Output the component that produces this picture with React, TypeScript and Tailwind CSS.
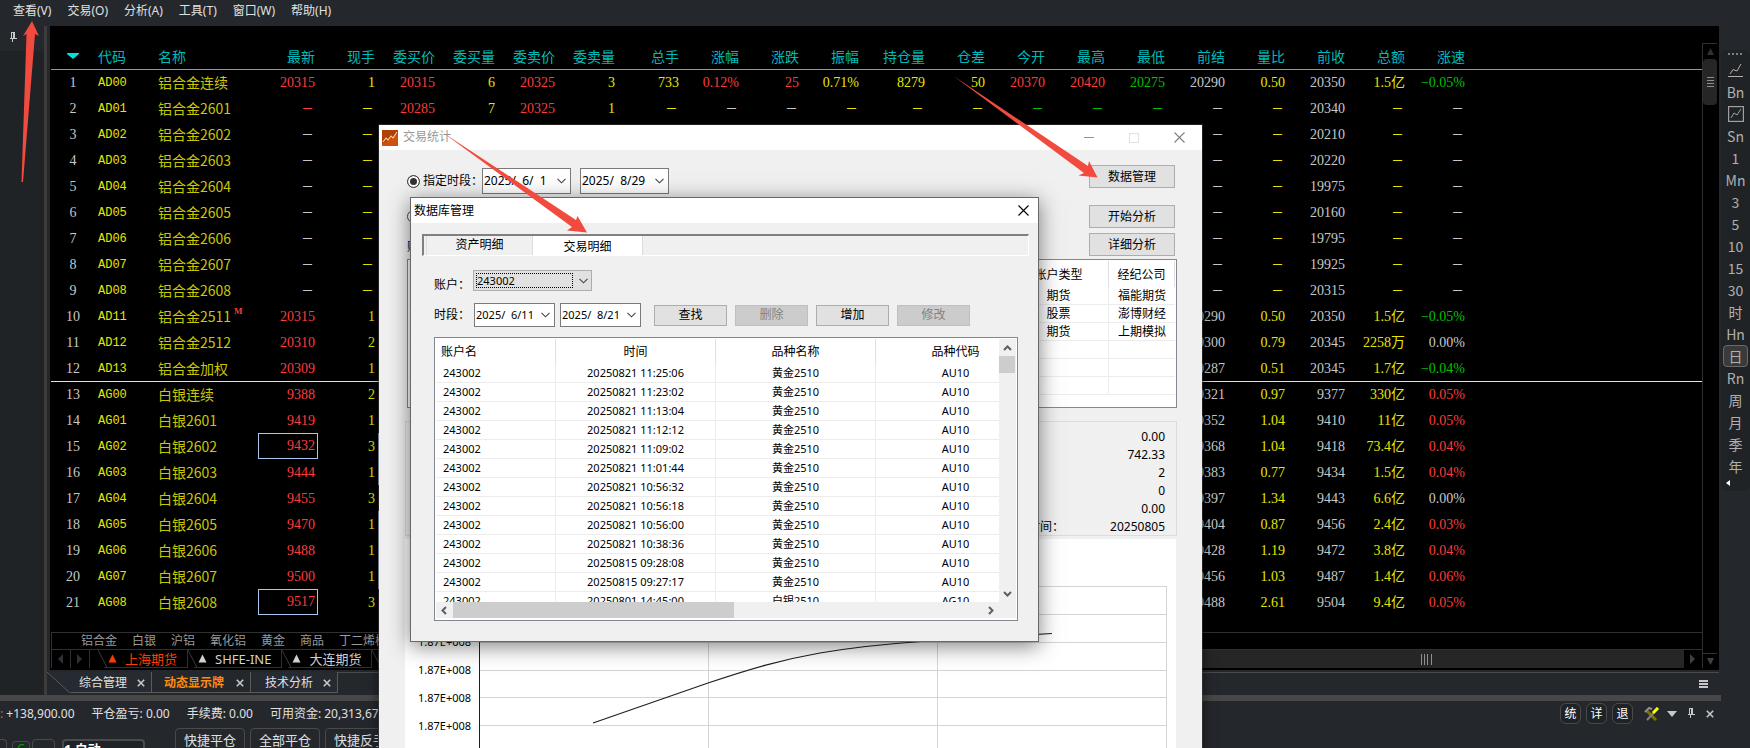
import type { ReactNode } from 'react';

interface Quote {
  code: string;
  name: string;
  main?: boolean;
  // latest, volume, bid, bid size, ask, ask size, total, change %, change, amplitude,
  // open interest, oi change, open, high, low, prev settle, ratio, prev close, amount, speed
  cells: string[];
}

// A leading letter gives the cell's colour: r red, y yellow, g green, w white
const COLORS: Record<string, string> = {
  r: 'text-[#ff3b3b]',
  y: 'text-[#e6e600]',
  g: 'text-[#00c000]',
  w: 'text-[#c8c8c8]',
};

const COLUMNS = [
  '最新', '现手', '委买价', '委买量', '委卖价', '委卖量', '总手', '涨幅', '涨跌', '振幅',
  '持仓量', '仓差', '今开', '最高', '最低', '前结', '量比', '前收', '总额', '涨速',
];

const COL_WIDTHS = [
  'w-[60px]', 'w-[60px]', 'w-[60px]', 'w-[60px]', 'w-[60px]', 'w-[60px]', 'w-[64px]', 'w-[60px]', 'w-[60px]', 'w-[60px]',
  'w-[66px]', 'w-[60px]', 'w-[60px]', 'w-[60px]', 'w-[60px]', 'w-[60px]', 'w-[60px]', 'w-[60px]', 'w-[60px]', 'w-[60px]',
];

function idle(close: string): string[] {
  return [
    'w-', 'y-', '', '', '', '', '', '', '', '',
    '', '', '', '', '', 'w-', 'y-', `w${close}`, 'y-', 'w-',
  ];
}

function live(last: string, vol: string, settle: string, ratio: string, close: string, amount: string, speed: string): string[] {
  return [
    `r${last}`, `y${vol}`, '', '', '', '', '', '', '', '',
    '', '', '', '', '', `w${settle}`, `y${ratio}`, `w${close}`, `y${amount}`, speed,
  ];
}

const QUOTES: Quote[] = [
  {
    code: 'AD00', name: '铝合金连续',
    cells: [
      'r20315', 'y1', 'r20315', 'y6', 'r20325', 'y3', 'y733', 'r0.12%', 'r25', 'y0.71%',
      'y8279', 'y50', 'r20370', 'r20420', 'g20275', 'w20290', 'y0.50', 'w20350', 'y1.5亿', 'g−0.05%',
    ],
  },
  {
    code: 'AD01', name: '铝合金2601',
    cells: [
      'r-', 'y-', 'r20285', 'y7', 'r20325', 'y1', 'y-', 'w-', 'w-', 'y-',
      'y-', 'y-', 'g-', 'g-', 'g-', 'w-', 'y-', 'w20340', 'y-', 'w-',
    ],
  },
  { code: 'AD02', name: '铝合金2602', cells: idle('20210') },
  { code: 'AD03', name: '铝合金2603', cells: idle('20220') },
  { code: 'AD04', name: '铝合金2604', cells: idle('19975') },
  { code: 'AD05', name: '铝合金2605', cells: idle('20160') },
  { code: 'AD06', name: '铝合金2606', cells: idle('19795') },
  { code: 'AD07', name: '铝合金2607', cells: idle('19925') },
  { code: 'AD08', name: '铝合金2608', cells: idle('20315') },
  { code: 'AD11', name: '铝合金2511', main: true, cells: live('20315', '1', '20290', '0.50', '20350', '1.5亿', 'g−0.05%') },
  { code: 'AD12', name: '铝合金2512', cells: live('20310', '2', '20300', '0.79', '20345', '2258万', 'w0.00%') },
  { code: 'AD13', name: '铝合金加权', cells: live('20309', '1', '20287', '0.51', '20345', '1.7亿', 'g−0.04%') },
  { code: 'AG00', name: '白银连续', cells: live('9388', '2', '9321', '0.97', '9377', '330亿', 'r0.05%') },
  { code: 'AG01', name: '白银2601', cells: live('9419', '1', '9352', '1.04', '9410', '11亿', 'r0.05%') },
  { code: 'AG02', name: '白银2602', cells: live('9432', '3', '9368', '1.04', '9418', '73.4亿', 'r0.04%') },
  { code: 'AG03', name: '白银2603', cells: live('9444', '1', '9383', '0.77', '9434', '1.5亿', 'r0.04%') },
  { code: 'AG04', name: '白银2604', cells: live('9455', '3', '9397', '1.34', '9443', '6.6亿', 'w0.00%') },
  { code: 'AG05', name: '白银2605', cells: live('9470', '1', '9404', '0.87', '9456', '2.4亿', 'r0.03%') },
  { code: 'AG06', name: '白银2606', cells: live('9488', '1', '9428', '1.19', '9472', '3.8亿', 'r0.04%') },
  { code: 'AG07', name: '白银2607', cells: live('9500', '1', '9456', '1.03', '9487', '1.4亿', 'r0.06%') },
  { code: 'AG08', name: '白银2608', cells: live('9517', '3', '9488', '2.61', '9504', '9.4亿', 'r0.05%') },
];

// row:column of the cells that flash
const FLASHES = ['14:0', '20:0', '14:2', '15:2', '17:2', '18:2', '19:2'];

const TRADES = [
  ['20250821 11:25:06', '黄金2510', 'AU10'],
  ['20250821 11:23:02', '黄金2510', 'AU10'],
  ['20250821 11:13:04', '黄金2510', 'AU10'],
  ['20250821 11:12:12', '黄金2510', 'AU10'],
  ['20250821 11:09:02', '黄金2510', 'AU10'],
  ['20250821 11:01:44', '黄金2510', 'AU10'],
  ['20250821 10:56:32', '黄金2510', 'AU10'],
  ['20250821 10:56:18', '黄金2510', 'AU10'],
  ['20250821 10:56:00', '黄金2510', 'AU10'],
  ['20250821 10:38:36', '黄金2510', 'AU10'],
  ['20250815 09:28:08', '黄金2510', 'AU10'],
  ['20250815 09:27:17', '黄金2510', 'AU10'],
  ['20250801 14:45:00', '白银2510', 'AG10'],
];

const ACCOUNTS = [
  ['期货', '福能期货'],
  ['股票', '澎博财经'],
  ['期货', '上期模拟'],
  ['', ''],
  ['', ''],
  ['', ''],
];

const PERIODS = ['Sn', '1', 'Mn', '3', '5', '10', '15', '30', '时', 'Hn', '日', 'Rn', '周', '月', '季', '年'];

function PinIcon() {
  return (
    <svg width="8" height="11" viewBox="0 0 8 11" fill="none" stroke="#c8c8c8" shapeRendering="crispEdges">
      <path d="M2.5 0.5V6M2 0.5H6M5.5 0.5V6M4.5 1V6M0.5 6.5H7.5M3.5 7V10" />
    </svg>
  );
}

function CloseIcon({ size, color }: { size: number; color: string }) {
  return (
    <svg width={size} height={size} viewBox="0 0 11 11" stroke={color} strokeWidth="1.1">
      <path d="M0.5 0.5L10.5 10.5M10.5 0.5L0.5 10.5" />
    </svg>
  );
}

function TabClose() {
  return (
    <svg width="8" height="8" viewBox="0 0 8 8" stroke="#c8c8c8" strokeWidth="1.6">
      <path d="M0.8 0.8L7.2 7.2M7.2 0.8L0.8 7.2" />
    </svg>
  );
}

function Chevron() {
  return (
    <svg width="9" height="6" viewBox="0 0 9 6" fill="none" stroke="#444" strokeWidth="1.1">
      <path d="M0.5 0.8L4.5 4.8L8.5 0.8" />
    </svg>
  );
}

function Quotes() {
  return (
    <table className="w-full table-fixed border-separate border-spacing-0 whitespace-nowrap">
      <colgroup>
        <col className="w-[47px]" />
        <col className="w-[60px]" />
        <col className="w-[100px]" />
        {COL_WIDTHS.map((w, i) => (
          <col key={i} className={w} />
        ))}
        <col />
      </colgroup>
      <thead>
        <tr className="h-[43px] align-bottom text-[14px] leading-5 text-[#00baba] font-['Noto_Sans_CJK_SC',sans-serif]">
          <th className="pb-[10px] pr-[3px]">
            <svg className="mx-auto" width="12" height="6" viewBox="0 0 12 6">
              <path d="M0 0H12V1L6 6L0 1Z" fill="#00e0e0" />
            </svg>
          </th>
          <th className="pb-[3px] text-left font-normal">代码</th>
          <th className="pb-[3px] text-left font-normal">名称</th>
          {COLUMNS.map((c) => (
            <th key={c} className="pb-[3px] pr-[3px] text-right font-normal">{c}</th>
          ))}
          <th />
        </tr>
      </thead>
      <tbody>
        {QUOTES.map((q, row) => {
          const line = row === 0 ? 'border-t border-[#00d4d4]' : row === 12 ? 'border-t border-[#ffff00]' : 'border-t border-transparent';
          return (
            <tr key={q.code} className="h-[26px] leading-[18px]">
              <td className={`p-0 pr-[3px] text-center text-[14px] text-[#c8c8c8] font-['Liberation_Serif',serif] ${line}`}>{row + 1}</td>
              <td className={`p-0 text-[12px] text-[#e6e600] font-['Liberation_Mono',monospace] ${line}`}>{q.code}</td>
              <td className={`p-0 pb-px text-[14px] text-[#c8c800] font-['Noto_Sans_CJK_SC',sans-serif] ${line}`}>
                <div className="flex items-start gap-[3px]">
                  {q.name}
                  {q.main && <span className="text-[9px] font-bold leading-[9px] text-[#ff3b3b] font-['Liberation_Serif',serif]">M</span>}
                </div>
              </td>
              {q.cells.map((cell, col) => {
                const value = cell.slice(1);
                const flash = FLASHES.includes(`${row}:${col}`)
                  ? 'shadow-[inset_0_0_0_1px_#a8c8f0,0_-1px_0_0_#a8c8f0]'
                  : '';
                if (value === '-') {
                  return (
                    <td key={col} className={`p-0 pb-px pr-[6px] text-right text-[9px] font-bold font-['Liberation_Sans',sans-serif] ${COLORS[cell[0]]} ${line}`}>
                      —
                    </td>
                  );
                }
                return (
                  <td
                    key={col}
                    className={`p-0 pr-[3px] text-right text-[14px] font-['Liberation_Serif','Noto_Sans_CJK_SC',serif] ${COLORS[cell[0]] ?? ''} ${line}`}
                  >
                    {flash ? (
                      <div className="-mr-[3px] -mt-px flex h-[26px] items-center justify-end border border-[#a8c8f0] pr-[2px]">{value}</div>
                    ) : (
                      value
                    )}
                  </td>
                );
              })}
              <td className={`p-0 ${line}`} />
            </tr>
          );
        })}
      </tbody>
    </table>
  );
}

function MarketTab({ label, color }: { label: string; color: string }) {
  return (
    <button className={`flex h-[18px] items-center gap-2 border-b border-r border-[#303030] pl-1 pr-[10px] text-[13px] leading-4 ${color}`}>
      <svg width="9" height="9" viewBox="0 0 9 9">
        <path d="M4.5 0.5L8.5 8.5H0.5Z" fill="currentColor" />
      </svg>
      <span>{label}</span>
    </button>
  );
}

function Slant() {
  return (
    <svg className="-mr-3 shrink-0" width="18" height="18" viewBox="0 0 18 18" fill="none" stroke="#383838">
      <path d="M0 0L9 17.5" />
    </svg>
  );
}

function PageTab({ label, active, first }: { label: string; active?: boolean; first?: boolean }) {
  return (
    <div className={`relative flex h-[21px] items-center border-b border-r border-[#5a5a5a] pr-[6px] pt-px text-[12px] leading-4 ${first ? 'gap-[10px] bg-[#262a31] pl-8' : active ? 'gap-3 pl-3' : 'gap-[10px] bg-[#262a31] pl-[14px]'}`}>
      <button className={active ? 'font-bold text-[#ff8c10]' : 'text-[#e0e0e0]'}>{label}</button>
      <button aria-label="关闭"><TabClose /></button>
      {first && (
        <svg className="absolute left-0 top-0" width="24" height="21" viewBox="0 0 24 21">
          <path d="M0 0V21H24Z" fill="#24272c" />
          <path d="M0 0L23 21" stroke="#5a5a5a" />
        </svg>
      )}
    </div>
  );
}

function MarketFooter() {
  return (
    <div className="ml-px">
      <div className="flex h-[17px] items-center gap-[15px] border-l border-t border-[#303030] pl-[29px] text-[12px] leading-4 text-[#9a9a9a]">
        {['铝合金', '白银', '沪铝', '氧化铝', '黄金', '商品', '丁二烯橡胶'].map((s) => (
          <button key={s}>{s}</button>
        ))}
      </div>
      <div className="flex h-[19px] border-l border-t border-[#303030]">
        <button aria-label="向左" className="flex w-[19px] items-center justify-center border-r border-[#303030]">
          <svg width="6" height="10" viewBox="0 0 6 10"><path d="M5 0V10L0 5Z" fill="#303030" /></svg>
        </button>
        <button aria-label="向右" className="mr-2 flex w-[19px] items-center justify-center border-r border-[#303030]">
          <svg width="6" height="10" viewBox="0 0 6 10"><path d="M0 0V10L5 5Z" fill="#303030" /></svg>
        </button>
        <Slant />
        <MarketTab label="上海期货" color="text-[#ff3c00]" />
        <Slant />
        <MarketTab label="SHFE-INE" color="text-[#d0d0d0]" />
        <Slant />
        <MarketTab label="大连期货" color="text-[#d0d0d0]" />
        <Slant />
        <div className="flex flex-1 items-center justify-end bg-[#262626]">
          <svg className="mr-[252px]" width="11" height="11" viewBox="0 0 11 11" stroke="#909090" shapeRendering="crispEdges">
            <path d="M0.5 0V11M3.5 0V11M6.5 0V11M10.5 0V11" />
          </svg>
        </div>
        <button aria-label="向右滚动" className="flex w-[18px] items-center justify-center bg-black">
          <svg width="6" height="10" viewBox="0 0 6 10"><path d="M0 0V10L5 5Z" fill="#404040" /></svg>
        </button>
      </div>
    </div>
  );
}

function QuoteScrollbar() {
  return (
    <div className="flex w-[17px] shrink-0 flex-col pb-[2px] pr-[2px] pt-[17px]">
      <div className="flex flex-1 flex-col border-l border-t border-[#303030]">
        <button aria-label="向上" className="flex h-[15px] items-center justify-center">
          <svg width="7" height="7" viewBox="0 0 7 7"><path d="M3.5 0L7 7H0Z" fill="#303030" /></svg>
        </button>
        <div className="flex h-[46px] flex-col items-center justify-center gap-[2px] rounded bg-[#262626]">
          <div className="h-px w-[7px] bg-[#909090]" />
          <div className="h-px w-[7px] bg-[#909090]" />
          <div className="h-px w-[7px] bg-[#909090]" />
          <div className="h-px w-[7px] bg-[#909090]" />
        </div>
        <div className="flex-1" />
        <button aria-label="向下" className="flex h-[15px] items-center justify-center border-t border-[#303030]">
          <svg width="7" height="7" viewBox="0 0 7 7"><path d="M3.5 7L7 0H0Z" fill="#404040" /></svg>
        </button>
      </div>
    </div>
  );
}

function PeriodBar() {
  return (
    <div className="mt-6 flex h-[441px] flex-col items-center rounded-md bg-[#1f2326] text-[14px] text-[#b0b0b0] font-['Noto_Sans_CJK_SC',sans-serif]">
      <svg className="mt-[3px]" width="15" height="2" viewBox="0 0 15 2" stroke="#808080" strokeWidth="2" strokeDasharray="2 2">
        <path d="M0 1H15" />
      </svg>
      <button aria-label="分时" className="flex h-[26px] items-end pb-[3px]">
        <svg width="15" height="15" viewBox="0 0 15 15" fill="none" stroke="#b0b0b0">
          <path d="M2 11L5 6.5L9 8L13 1M0 13.5H15" />
        </svg>
      </button>
      <button className="flex h-[22px] items-center">Bn</button>
      <button aria-label="走势" className="flex h-[22px] items-center">
        <svg width="16" height="16" viewBox="0 0 16 16" fill="none" stroke="#a0a0a0">
          <rect x="0.5" y="0.5" width="15" height="15" strokeWidth="1.4" />
          <path d="M3 12L6 7L9 9L13 3" />
        </svg>
      </button>
      {PERIODS.map((p) => (
        <button
          key={p}
          className={`flex h-[22px] w-[25px] shrink-0 items-center justify-center ${p === '日' ? 'rounded border border-[#6a6a6a] bg-[#3a3a3a]' : ''}`}
        >
          {p}
        </button>
      ))}
      <svg className="mr-4 mt-[3px]" width="4" height="6" viewBox="0 0 4 6"><path d="M4 0V6L0 3Z" fill="#fff" /></svg>
    </div>
  );
}

function StatusPanel() {
  return (
    <div className="flex flex-1 justify-between bg-[#24272c] text-[12px] text-[#e0e0e0]">
      <div className="w-[378px] whitespace-nowrap">
        <div className="flex h-[26px] items-center gap-[17px] overflow-hidden leading-4">
          <span><span className="text-[#c86432]">:</span> +138,900.00</span>
          <span>平仓盈亏: 0.00</span>
          <span>手续费: 0.00</span>
          <span>可用资金: 20,313,67</span>
        </div>
        <div className="flex items-start overflow-hidden text-[13px]">
          <div className="mt-3 h-6 w-[7px] shrink-0 rounded-tr border-r border-t border-[#4a4a4a]" />
          <button className="ml-[5px] mt-[14px] h-[14px] w-[18px] shrink-0 rounded-t border-x border-t border-[#4a4a4a] text-[12px] leading-3 text-[#00a000]">C</button>
          <div className="ml-[2px] mt-3 h-6 w-[23px] shrink-0 rounded border border-[#4a4a4a]" />
          <select aria-label="手数" className="ml-[7px] mt-3 h-[18px] w-[83px] shrink-0 appearance-none rounded-t border-x-2 border-t-2 border-[#4a4a4a] bg-[#1f2326] font-bold leading-4 text-white">
            <option>1 自动</option>
          </select>
          <div className="ml-[30px] flex gap-[5px]">
            {['快捷平仓', '全部平仓', '快捷反手'].map((b) => (
              <button key={b} className="mt-px h-[26px] w-[70px] shrink-0 rounded border border-[#4a4a4a]">{b}</button>
            ))}
          </div>
        </div>
      </div>
      <div className="mt-[2px] flex h-[21px] items-center pr-9">
        <div className="flex gap-[5px]">
          {['统', '详', '退'].map((b) => (
            <button key={b} className="size-[21px] rounded-md border border-[#4a4a4a] bg-[#1f2326] text-[12px] leading-4 text-white">{b}</button>
          ))}
        </div>
        <button aria-label="设置" className="ml-[11px]">
          <svg width="15" height="14" viewBox="0 0 15 14" fill="none">
            <path d="M3 4L12 13" stroke="#807000" strokeWidth="3" />
            <path d="M3 13L14 1" stroke="#808080" strokeWidth="2" />
            <path d="M9 6L14 1" stroke="#ffff00" strokeWidth="3" />
            <path d="M1 5L5 1L8 2" stroke="#909090" strokeWidth="2" />
          </svg>
        </button>
        <svg className="ml-2" width="10" height="6" viewBox="0 0 10 6"><path d="M0 0H10L5 6Z" fill="#c8c8c8" /></svg>
        <button aria-label="固定" className="ml-[10px]"><PinIcon /></button>
        <button aria-label="关闭" className="ml-[11px]"><TabClose /></button>
      </div>
    </div>
  );
}

function DateBox({ label, value, className }: { label: string; value: string; className: string }) {
  return (
    <div className={`flex items-center border border-[#7a7a7a] bg-white pr-1 ${className}`}>
      <input aria-label={label} defaultValue={value} className="w-0 min-w-0 flex-1 bg-transparent pl-px text-black outline-none" />
      <button aria-label="选择日期"><Chevron /></button>
    </div>
  );
}

function WinButton({ children, className = '', disabled }: { children: ReactNode; className?: string; disabled?: boolean }) {
  return (
    <button
      disabled={disabled}
      className={`border text-[12px] leading-4 ${disabled ? 'border-[#bfbfbf] bg-[#cccccc] text-[#838383]' : 'border-[#adadad] bg-[#e1e1e1] text-black'} ${className}`}
    >
      {children}
    </button>
  );
}

function EquityChart() {
  return (
    <svg className="block bg-white" width="771" height="230" viewBox="0 0 771 230">
      <g stroke="#d4d4d4" shapeRendering="crispEdges">
        <path d="M74 47.5H762M74 75.5H762M74 103.5H762M74 131.5H762M74 158.5H762M74 186.5H762M74 214.5H762" />
        <path d="M303.5 47V230M532.5 47V230M761.5 47V230" />
      </g>
      <path d="M74.5 47V230" stroke="#202020" shapeRendering="crispEdges" />
      <path d="M188 184L303 144C345 130 375 121 415 114C450 108 480 105 516 102.5C560 100 600 97 647 94.5" fill="none" stroke="#202020" strokeWidth="1.2" />
      <g className="text-[11px]" fill="#000">
        <text x="13" y="107">1.87E+008</text>
        <text x="13" y="135">1.87E+008</text>
        <text x="13" y="163">1.87E+008</text>
        <text x="13" y="191">1.87E+008</text>
      </g>
    </svg>
  );
}

function StatsWindow() {
  return (
    <section className="absolute left-[378px] top-[124px] w-[825px] border border-[#505050]/40 bg-[#f0f0f0] bg-clip-padding text-[12px] text-black shadow-[0_0_12px_rgba(0,0,0,0.5)]">
      <header className="flex h-[25px] items-center bg-white pl-[3px] pr-[17px]">
        <svg width="16" height="16" viewBox="0 0 16 16">
          <rect width="16" height="16" fill="#d05010" />
          <path d="M0 0H16V4L0 14Z" fill="#b04008" />
          <path d="M1 12L4 8L6 10L9 6L11 8L15 2" fill="none" stroke="#ffd8a0" strokeWidth="1.1" />
        </svg>
        <h2 className="ml-[5px] flex-1 pb-px leading-4 text-[#999]">交易统计</h2>
        <div className="flex items-center gap-[35px]">
          <button aria-label="最小化" className="h-px w-[10px] bg-[#909090]" />
          <button aria-label="最大化" className="size-[10px] border border-[#e0e0e0]" />
          <button aria-label="关闭"><CloseIcon size={11} color="#808080" /></button>
        </div>
      </header>
      <div className="px-[26px]">
        <div className="flex h-[109px] justify-between">
          <div className="pl-[2px] pt-[18px]">
            <div className="flex h-[26px] items-center">
              <input id="range" type="radio" name="mode" defaultChecked className="m-0 size-[13px] shrink-0 appearance-none rounded-full border border-[#444] bg-[#333] shadow-[inset_0_0_0_2px_#fff]" />
              <label htmlFor="range" className="ml-[3px] w-[59px] whitespace-nowrap">指定时段：</label>
              <DateBox label="开始日期" value={'2025/\u00a0 6/\u00a0 1'} className="relative h-[26px] w-[89px]" />
              <DateBox label="结束日期" value={'2025/\u00a0 8/29'} className="ml-[9px] h-[26px] w-[89px]" />
            </div>
            <div className="mt-[13px] flex items-center">
              <input id="all" type="radio" name="mode" className="m-0 size-[13px] appearance-none rounded-full border border-[#444] bg-white" />
              <label htmlFor="all" className="ml-[3px]">全部时段</label>
            </div>
            <div className="mt-[14px] leading-4">账户：</div>
          </div>
          <div className="flex flex-col pr-px pt-[15px]">
            <WinButton className="h-[23px] w-[86px] pt-px">数据管理</WinButton>
            <WinButton className="mt-[17px] h-[23px] w-[86px] pt-px">开始分析</WinButton>
            <WinButton className="mt-[5px] h-[23px] w-[86px] pt-px">详细分析</WinButton>
          </div>
        </div>
        <div className="ml-[2px] mr-[-1px] h-[149px] border border-[#828790] bg-white p-px">
          <table className="w-full table-fixed border-separate border-spacing-0 leading-4">
            <colgroup>
              <col />
              <col className="w-[100px]" />
              <col className="w-[66px]" />
            </colgroup>
            <thead>
              <tr className="h-[26px]">
                <th />
                <th className="border-r border-[#e0e0e0] p-0 pt-[2px] font-normal">账户类型</th>
                <th className="border-r border-[#e0e0e0] p-0 pt-[2px] font-normal">经纪公司</th>
              </tr>
            </thead>
            <tbody>
              {ACCOUNTS.map((a, i) => (
                <tr key={i} className="h-[18px] text-center">
                  <td className="border-b border-[#ececec] p-0" />
                  <td className="border-b border-r border-[#ececec] p-0">{a[0]}</td>
                  <td className="border-b border-[#ececec] p-0">{a[1]}</td>
                </tr>
              ))}
            </tbody>
          </table>
        </div>
        <div className="mr-[-1px] mt-[13px] flex h-[115px] justify-end border border-[#dcdcdc] pr-[11px] pt-[6px]">
          <dl className="grid w-[185px] auto-rows-[18px] grid-cols-[1fr_auto] content-start text-right leading-[18px]">
            <dt /><dd>0.00</dd>
            <dt /><dd>742.33</dd>
            <dt /><dd>2</dd>
            <dt /><dd>0</dd>
            <dt /><dd>0.00</dd>
            <dt className="text-left">最后交易时间：</dt><dd>20250805</dd>
          </dl>
        </div>
        <div className="mt-[3px]">
          <EquityChart />
        </div>
      </div>
    </section>
  );
}

function TradeList() {
  return (
    <div className="ml-[23px] mr-[20px] mt-[10px] border border-[#828790] bg-white p-px">
      <div className="flex h-[263px]">
        <div className="min-w-0 flex-1 overflow-hidden">
          <table className="w-[600px] table-fixed border-separate border-spacing-0 whitespace-nowrap">
            <colgroup>
              <col className="w-[120px]" />
              <col className="w-[160px]" />
              <col className="w-[160px]" />
              <col className="w-[160px]" />
            </colgroup>
            <thead>
              <tr className="h-[25px] leading-4">
                <th className="border-r border-[#e0e0e0] p-0 pl-[5px] text-left font-normal">账户名</th>
                <th className="border-r border-[#e0e0e0] p-0 font-normal">时间</th>
                <th className="border-r border-[#e0e0e0] p-0 font-normal">品种名称</th>
                <th className="border-r border-[#e0e0e0] p-0 font-normal">品种代码</th>
              </tr>
            </thead>
            <tbody className="text-[11px]">
              {TRADES.map(([time, name, code]) => (
                <tr key={time} className="h-[19px] text-center leading-4">
                  <td className="border-b border-r border-[#ececec] p-0 pl-[7px] text-left">243002</td>
                  <td className="border-b border-r border-[#ececec] p-0">{time}</td>
                  <td className="border-b border-r border-[#ececec] p-0">{name}</td>
                  <td className="border-b border-r border-[#ececec] p-0">{code}</td>
                </tr>
              ))}
            </tbody>
          </table>
        </div>
        <div className="flex w-[17px] flex-col items-center bg-[#f0f0f0] pr-px">
          <svg className="mt-[6px]" width="9" height="6" viewBox="0 0 9 6" fill="none" stroke="#606060" strokeWidth="2"><path d="M1 5L4.5 1.5L8 5" /></svg>
          <div className="mt-[5px] h-[17px] w-full bg-[#cdcdcd]" />
          <svg className="mb-[5px] mt-auto" width="9" height="6" viewBox="0 0 9 6" fill="none" stroke="#606060" strokeWidth="2"><path d="M1 1L4.5 4.5L8 1" /></svg>
        </div>
      </div>
      <div className="mb-px flex h-[16px] items-center bg-[#f0f0f0] pl-[5px] pr-[22px]">
        <svg width="6" height="9" viewBox="0 0 6 9" fill="none" stroke="#606060" strokeWidth="2"><path d="M5 1L1.5 4.5L5 8" /></svg>
        <div className="ml-[6px] h-full w-[281px] bg-[#cdcdcd]" />
        <svg className="ml-auto" width="6" height="9" viewBox="0 0 6 9" fill="none" stroke="#606060" strokeWidth="2"><path d="M1 1L4.5 4.5L1 8" /></svg>
      </div>
    </div>
  );
}

function DatabaseDialog() {
  return (
    <section className="absolute left-[410px] top-[197px] w-[629px] border border-[#686868] bg-[#f0f0f0] pb-5 text-[12px] text-black shadow-[0_4px_20px_rgba(0,0,0,0.5)]">
      <header className="flex h-[25px] items-center justify-between bg-white pl-[3px] pr-[9px]">
        <h2 className="leading-4">数据库管理</h2>
        <button aria-label="关闭"><CloseIcon size={11} color="#000" /></button>
      </header>
      <div className="ml-[11px] mr-[9px] mt-[11px] flex h-[22px] border-b border-l-2 border-r border-t-2 border-b-white border-l-[#808080] border-r-white border-t-[#808080] pl-[2px]">
        <button className="w-[106px] border-l border-[#dcdcdc] pb-[2px] leading-4">资产明细</button>
        <button className="w-[111px] border-x border-[#dcdcdc] bg-white pt-[2px] leading-4">交易明细</button>
      </div>
      <div className="ml-[23px] mt-[14px] flex h-[21px] items-center">
        <label htmlFor="account" className="w-[39px] pt-2 leading-4">账户：</label>
        <div className="flex h-[21px] w-[119px] items-center border border-[#adadad] bg-[#e1e1e1] px-[2px]">
          <select id="account" className="h-[15px] w-[97px] appearance-none border border-dotted border-black bg-transparent text-[11px] leading-3">
            <option>243002</option>
          </select>
          <span className="ml-[6px]"><Chevron /></span>
        </div>
      </div>
      <div className="ml-[23px] mt-3 flex h-[24px] items-center">
        <span className="w-10 leading-4">时段：</span>
        <DateBox label="起始" value={'2025/\u00a0 6/11'} className="h-[24px] w-[81px] text-[11px]" />
        <DateBox label="截止" value={'2025/\u00a0 8/21'} className="ml-[5px] h-[24px] w-[81px] text-[11px]" />
        <div className="ml-[13px] flex gap-2">
          <WinButton className="h-[21px] w-[73px]">查找</WinButton>
          <WinButton className="h-[21px] w-[73px]" disabled>删除</WinButton>
          <WinButton className="h-[21px] w-[73px]">增加</WinButton>
          <WinButton className="h-[21px] w-[73px]" disabled>修改</WinButton>
        </div>
      </div>
      <TradeList />
    </section>
  );
}

export default function App() {
  return (
    <div className="relative flex h-screen flex-col overflow-hidden bg-[#24272c] font-['Noto_Sans','Noto_Sans_CJK_SC',sans-serif]">
      <nav className="flex h-[26px] shrink-0 items-center gap-4 pb-1 pl-[13px] text-[12px] leading-4 text-[#e0e0e0]">
        {['查看(V)', '交易(O)', '分析(A)', '工具(T)', '窗口(W)', '帮助(H)'].map((m) => (
          <button key={m}>{m}</button>
        ))}
      </nav>

      <div className="flex">
        {/* Collapsed side panel */}
        <aside className="flex w-[47px] shrink-0 flex-col border-r-[3px] border-[#3c3c3c]">
          <div className="h-[25px] pl-[9px] pt-[6px]"><PinIcon /></div>
          <div className="flex-1 bg-[#1f2326]" />
        </aside>

        <main className="min-w-0 flex-1">
          <div className="ml-[3px] flex bg-black">
            <div className="min-w-0 flex-1">
              <div className="mb-[17px] ml-px"><Quotes /></div>
              <MarketFooter />
              <div className="h-[2px]" />
            </div>
            <QuoteScrollbar />
          </div>
          <div className="mt-[2px] flex h-[23px] items-start">
            <PageTab label="综合管理" first />
            <PageTab label="动态显示牌" active />
            <PageTab label="技术分析" />
            <div className="flex h-full flex-1 items-center justify-end border-t border-[#4a4a4a] pr-[11px]">
              <button aria-label="菜单" className="flex flex-col gap-px">
                <span className="h-[2px] w-[9px] bg-[#c8c8c8]" />
                <span className="h-[2px] w-[9px] bg-[#c8c8c8]" />
                <span className="h-[2px] w-[9px] bg-[#c8c8c8]" />
              </button>
            </div>
          </div>
        </main>

        <aside className="w-[31px] shrink-0 pl-[2px]">
          <PeriodBar />
        </aside>
      </div>

      <div className="mr-[29px] h-[6px] shrink-0 bg-[#474747]" />
      <StatusPanel />

      <StatsWindow />
      <DatabaseDialog />

      {/* Pointer arrows */}
      <svg className="pointer-events-none absolute left-0 top-0" width="1750" height="748" viewBox="0 0 1750 748" fill="#f04b3e">
        <path d="M32 21L39 36L35 34L23 182H21.5L26.5 34L23 36Z" />
        <path d="M442 132L576 220L577.5 216L587 232.5L567 230.5L572 227Z" />
        <path d="M953.5 76L1088 166L1089 161L1097.500 177.5L1078.5 175.5L1084 173Z" />
      </svg>
    </div>
  );
}
